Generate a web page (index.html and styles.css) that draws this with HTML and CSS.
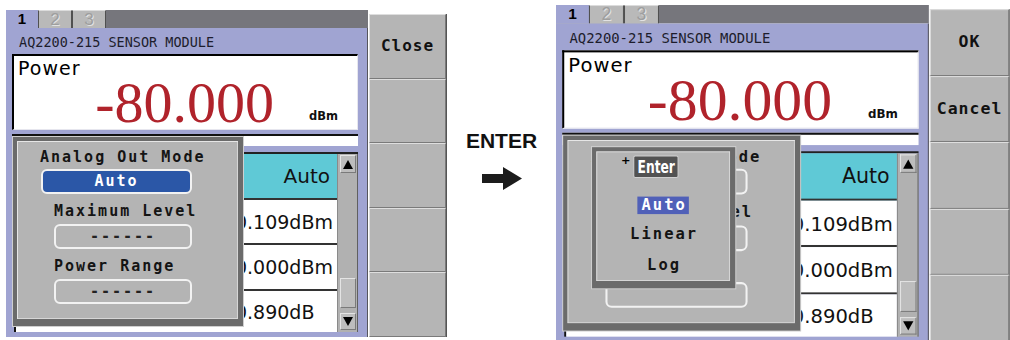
FILE: index.html
```html
<!DOCTYPE html>
<html>
<head>
  <title>AQ2200-215 sensor module &gt; analog out</title>

  <link rel="stylesheet" href="styles.css">
</head>
<body>
  <div class="page">

    <div class="screen screen-left">
      <div class="main">
        <div class="tabs">
          <span class="tab active">1</span>
          <span class="tab">2</span>
          <span class="tab">3</span>
        </div>
        <div class="panel">
          <p class="title">AQ2200-215 SENSOR MODULE</p>
          <div class="power">
            <span class="power-label">Power</span>
            <div class="power-value"><span class="num">-80.000</span><span class="unit">dBm</span></div>
          </div>
          <div class="strip"></div>
          <div class="list">
            <ul class="rows">
              <li class="row head"><span>Auto</span></li>
              <li class="row"><span>-10.109dBm</span></li>
              <li class="row"><span>-10.000dBm</span></li>
              <li class="row last"><span>-10.890dB</span></li>
            </ul>
            <div class="scroll">
              <span class="arrow up"></span>
              <span class="thumb"></span>
              <span class="arrow down"></span>
            </div>
          </div>
        </div>
      </div>
      <nav class="keys">
        <button class="key">Close</button>
        <button class="key"></button>
        <button class="key"></button>
        <button class="key"></button>
        <button class="key"></button>
      </nav>

      <div class="frame dialog">
        <span class="field-label first">Analog Out Mode</span>
        <span class="value wide selected">Auto</span>
        <span class="field-label">Maximum Level</span>
        <span class="value">------</span>
        <span class="field-label">Power Range</span>
        <span class="value">------</span>
      </div>
    </div>

    <div class="step">
      <p class="step-key">ENTER</p>
      <svg class="step-arrow" width="40" height="23" viewBox="0 0 40 23">
        <path d="M0 7 H21 V0 L40 11.5 L21 23 V16 H0 Z" fill="#1c1c1c"/>
      </svg>
    </div>

    <div class="screen screen-right">
      <div class="main">
        <div class="tabs">
          <span class="tab active">1</span>
          <span class="tab">2</span>
          <span class="tab">3</span>
        </div>
        <div class="panel">
          <p class="title">AQ2200-215 SENSOR MODULE</p>
          <div class="power">
            <span class="power-label">Power</span>
            <div class="power-value"><span class="num">-80.000</span><span class="unit">dBm</span></div>
          </div>
          <div class="strip"></div>
          <div class="list">
            <ul class="rows">
              <li class="row head"><span>Auto</span></li>
              <li class="row"><span>-10.109dBm</span></li>
              <li class="row"><span>-10.000dBm</span></li>
              <li class="row last"><span>-10.890dB</span></li>
            </ul>
            <div class="scroll">
              <span class="arrow up"></span>
              <span class="thumb"></span>
              <span class="arrow down"></span>
            </div>
          </div>
        </div>
      </div>
      <nav class="keys">
        <button class="key">OK</button>
        <button class="key">Cancel</button>
        <button class="key"></button>
        <button class="key"></button>
        <button class="key"></button>
      </nav>

      <div class="frame dialog">
        <span class="field-label first">Analog Out Mode</span>
        <span class="value wide"></span>
        <span class="field-label">Maximum Level</span>
        <span class="value"></span>
        <span class="field-label">Power Range</span>
        <span class="value"></span>
      </div>

      <div class="frame popup">
        <div class="popup-head"><span class="plus">+</span><span class="enter"><span>Enter</span></span></div>
        <ul class="options">
          <li class="picked">Auto</li>
          <li>Linear</li>
          <li>Log</li>
        </ul>
      </div>
    </div>

  </div>
</body>
</html>
```

FILE: styles.css
```css
* {
  box-sizing: border-box;
}

body {
  margin: 0;
  background-color: #fff;
  font-family: "DejaVu Sans Mono", monospace;
}

p {
  margin: 0;
}

ul {
  list-style-type: none;
  margin: 0;
  padding: 0;
}

.page {
  display: flex;
  align-items: flex-start;
  width: 1010px;
  height: 340px;
  overflow: hidden;
}

/* one instrument screen, drawn at the size of the left one */
.screen {
  position: relative;
  display: flex;
  flex: none;
  gap: 1px;
  width: 441px;
  height: 327px;
}

.screen-left {
  margin: 10px 0 0 6px;
}

.screen-right {
  margin-top: 5px;
  transform: scale(1.03);
  transform-origin: 0 0;
}

.main {
  display: flex;
  flex-direction: column;
  width: 362px;
}

.tabs {
  display: flex;
  height: 18px;
  background-color: #76767c;
}

.tab {
  width: 34px;
  background-color: #b9b9b9;
  border: 1px solid #505050;
  border-top-color: #dcdcdc;
  border-bottom: 0;
  color: #9e9e9e;
  font: 17px/17px "Liberation Sans", sans-serif;
  text-align: center;
  text-shadow: 1px 1px 0 #e2e2e2;
}

.tab.active {
  width: 32px;
  padding-top: 1px;
  background-color: #a0a4d2;
  border: 0;
  color: #000;
  font: bold 15px/16px "Liberation Sans", sans-serif;
  text-shadow: none;
}

.panel {
  flex: 1;
  background-color: #a0a4d2;
  border-right: 1px solid #55555c;
}

.title {
  margin: 7px 0 0 13px;
  color: #1d1d2c;
  font-size: 13.5px;
  line-height: 14px;
}

.power {
  width: 346px;
  height: 76px;
  margin: 5px 0 0 6px;
  padding: 2px 19px 0 4px;
  background-color: #fff;
  border-top: 2px solid #000;
  border-left: 2px solid #000;
  border-right: 1px solid #e6e6ee;
  border-bottom: 1px solid #e6e6ee;
}

.power-label {
  display: block;
  color: #000;
  font: 19px/20px "DejaVu Sans", sans-serif;
  letter-spacing: 1px;
}

.power-value {
  display: flex;
  justify-content: flex-end;
  gap: 35px;
  height: 49px;
}

.num {
  color: #b0232b;
  font: 58px/49px "Liberation Serif", serif;
}

.unit {
  align-self: flex-end;
  margin-bottom: 5px;
  color: #111;
  font: bold 11.5px/12px "DejaVu Sans", sans-serif;
}

.strip {
  width: 346px;
  height: 12px;
  margin: 4px 0 0 6px;
  background-color: #fff;
  border-top: 2px solid #111;
}

.list {
  display: flex;
  width: 344px;
  height: 180px;
  margin: 6px 0 0 8px;
  border-top: 2px solid #222;
}

.rows {
  display: flex;
  flex-direction: column;
  width: 323px;
  border-left: 2px solid #111;
}

/* values start at a fixed column, their sign and tens lie under the dialog */
.row {
  display: flex;
  align-items: center;
  height: 46px;
  padding-left: 200px;
  background-color: #fff;
  border-bottom: 2px solid #333;
  color: #111;
  font: 19px/24px "DejaVu Sans", sans-serif;
  white-space: pre;
}

.row:nth-child(2) {
  height: 45px;
}

.row.head {
  justify-content: flex-end;
  padding: 0 7px 0 0;
  background-color: #5fc9d6;
  font-size: 20px;
}

.row.last {
  flex: 1;
  border-bottom: 0;
}

.scroll {
  display: flex;
  flex: 1;
  flex-direction: column;
  padding: 1px 1px 2px 2px;
  background-color: #b1b1b1;
  border-left: 1px solid #8a8a8a;
  border-right: 1px solid #606060;
}

.arrow,
.thumb {
  display: flex;
  align-items: center;
  justify-content: center;
  background-color: #bdbdbd;
  border: 1px solid #7a7a7a;
  border-top-color: #e4e4e4;
  border-left-color: #e4e4e4;
}

.arrow {
  height: 18px;
}

.arrow::before {
  content: "";
  border-left: 5px solid transparent;
  border-right: 5px solid transparent;
}

.arrow.up::before {
  border-bottom: 9px solid #000;
}

.arrow.down {
  height: 17px;
}

.arrow.down::before {
  border-top: 9px solid #000;
}

.thumb {
  height: 30px;
  margin: auto 0 5px;
}

.keys {
  display: flex;
  flex-direction: column;
  width: 78px;
  margin-top: 4px;
  border-right: 1px solid #555;
}

.key {
  flex: 1;
  padding: 0;
  background-color: #b5b5b5;
  border: 1px solid #7a7a7a;
  border-top-color: #dedede;
  border-left-color: #dedede;
  color: #111;
  font: bold 16px/18px "DejaVu Sans Mono", monospace;
  letter-spacing: 1px;
}

/* raised grey window, used for the settings dialog and the pick list */
.frame {
  position: absolute;
  display: flex;
  flex-direction: column;
  background-color: #b4b4b4;
  border-style: solid;
  border-color: #6b6b6b;
  border-width: 4px 5px 7px 4px;
  box-shadow: 0 0 0 1px #cfcfcf, inset 1px 1px 0 #e6e6e6, inset -1px -1px 0 #d6d6d6;
}

.dialog {
  top: 127px;
  left: 7px;
  width: 230px;
  height: 189px;
  align-items: flex-start;
}

.field-label {
  margin: 9px 0 0 37px;
  color: #141414;
  font: bold 15px/16px "DejaVu Sans Mono", monospace;
  letter-spacing: 2px;
  white-space: pre;
}

.field-label.first {
  margin: 8px 0 0 23px;
}

.value {
  width: 138px;
  height: 25px;
  margin: 5px 0 0 37px;
  border: 2px solid #f2f2f2;
  border-radius: 6px;
  color: #222;
  font: bold 15px/21px "DejaVu Sans Mono", monospace;
  letter-spacing: 2px;
  text-align: center;
}

.value.wide {
  width: 151px;
  margin: 4px 0 0 24px;
}

.value.selected {
  background-color: #2b57a7;
  color: #fff;
}

.popup {
  top: 138px;
  left: 35px;
  width: 139px;
  height: 137px;
}

.popup-head {
  display: flex;
  align-items: flex-start;
  margin: 4px 0 0 24px;
}

.plus {
  width: 12px;
  margin-top: -1px;
  color: #000;
  font: bold 11px/12px "DejaVu Sans", sans-serif;
}

.enter {
  display: flex;
  justify-content: center;
  width: 44px;
  height: 22px;
  background-color: #525252;
  border: 1px solid #d0d0d0;
  border-radius: 2px;
  color: #fff;
  font: bold 17px/20px "DejaVu Sans Condensed", "DejaVu Sans", sans-serif;
}

.enter span {
  display: inline-block;
  transform: scaleX(0.78);
}

.options {
  display: flex;
  flex-direction: column;
  align-items: center;
  margin-top: 18px;
  color: #141414;
  font: bold 15px/16px "DejaVu Sans Mono", monospace;
  letter-spacing: 2px;
}

.options li {
  padding: 0 2px 0 4px;
}

.options li + li {
  margin-top: 11px;
}

.options li:last-child {
  margin-top: 14px;
}

.options .picked {
  height: 17px;
  line-height: 17px;
  background-color: #5060b8;
  color: #fff;
}

.step {
  display: flex;
  flex: none;
  flex-direction: column;
  align-items: center;
  width: 109px;
  margin-top: 129px;
}

.step-key {
  color: #111;
  font: bold 21px/24px "Liberation Sans", sans-serif;
}

.step-arrow {
  margin-top: 14px;
}
```
